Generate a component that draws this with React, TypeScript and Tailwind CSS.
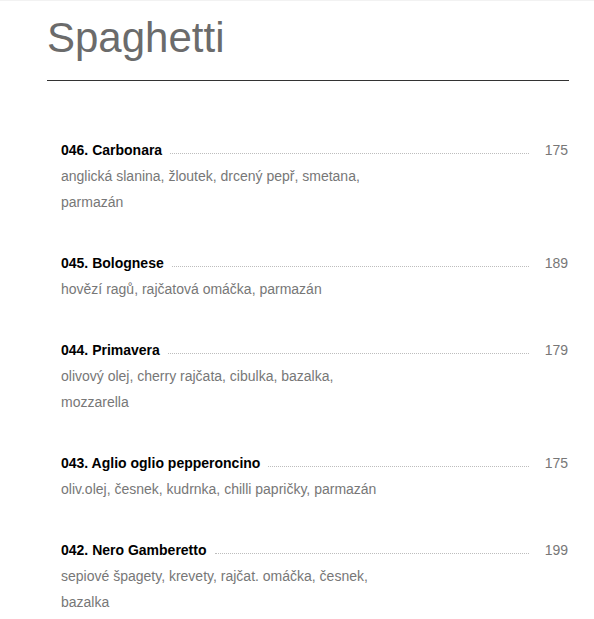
import React from "react";

const items = [
  { name: "046. Carbonara", price: "175", desc: "anglická slanina, žloutek, drcený pepř, smetana, parmazán" },
  { name: "045. Bolognese", price: "189", desc: "hovězí ragů, rajčatová omáčka, parmazán" },
  { name: "044. Primavera", price: "179", desc: "olivový olej, cherry rajčata, cibulka, bazalka, mozzarella" },
  { name: "043. Aglio oglio pepperoncino", price: "175", desc: "oliv.olej, česnek, kudrnka, chilli papričky, parmazán" },
  { name: "042. Nero Gamberetto", price: "199", desc: "sepiové špagety, krevety, rajčat. omáčka, česnek, bazalka" },
];

export default function App() {
  return (
    <div className="w-[594px] h-[619px] bg-white overflow-hidden border-t border-[#f2f2f2]" style={{ fontFamily: '"Liberation Sans", Arial, sans-serif' }}>
      <div className="pl-[47px] pr-[25px] pt-[13px]">
        <h1 className="text-[42px] leading-[48px] text-[#6b6b6b] font-normal">Spaghetti</h1>
        <div className="mt-[18px] h-px bg-[#333]" />
      </div>
      <div className="pl-[61px] pr-[26px] pt-[56px] flex flex-col gap-[35px]">
        {items.map((it) => (
          <div key={it.name} className="flex flex-col">
            <div className="flex items-center h-[26px]">
              <span className="text-[14px] font-bold text-black leading-[26px] whitespace-nowrap">{it.name}</span>
              <span className="flex-1 ml-[8px] mr-[16px] border-b border-dotted border-[#bdbdbd] translate-y-[3px]" />
              <span className="text-[14px] text-[#777] leading-[26px]">{it.price}</span>
            </div>
            <p className="text-[14px] leading-[26px] text-[#777] w-[330px]">{it.desc}</p>
          </div>
        ))}
      </div>
    </div>
  );
}
